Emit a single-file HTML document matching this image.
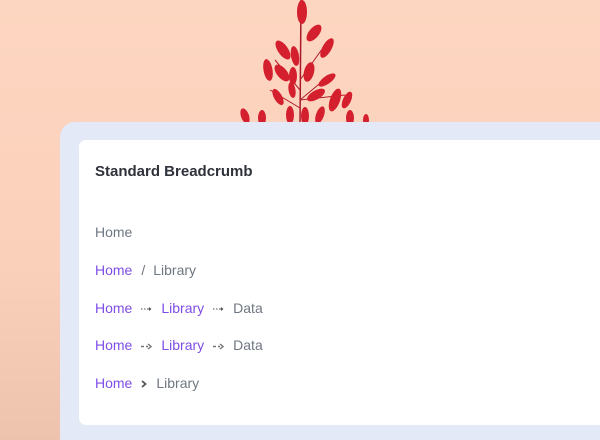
<!DOCTYPE html>
<html><head><style>
html,body{margin:0;padding:0;width:600px;height:440px;overflow:hidden}
body{position:relative;background:linear-gradient(180deg,#fdd6c1 0%,#fbd0ba 60%,#eec3ad 100%);font-family:"Liberation Sans",Roboto,sans-serif}
.outer{position:absolute;left:60px;top:122px;width:560px;height:340px;background:#e3e9f7;border-radius:15px}
.inner{position:absolute;left:79px;top:140px;width:540px;height:285px;background:#fff;border-radius:7px}
.t{position:absolute;left:95px;top:163px;font-size:15px;font-weight:bold;color:#2f323b}
.row{position:absolute;left:95px;font-size:14px;color:#6f7782;white-space:nowrap;height:18px;line-height:18px}
.a{color:#7e4ee6}
.s{display:inline-block;vertical-align:middle;margin:0 9px}
</style></head><body>
<svg style="position:absolute;left:0;top:0" width="600" height="130">
<g fill="#d41f2e" stroke="none">
<path d="M301 0 L300 125" stroke="#a8182a" stroke-width="1.5"/>
<path d="M300 90 L275 60 M300 80 L325 45 M300 100 L330 75 M300 108 L270 90 M300 100 L345 95" stroke="#b21a2a" stroke-width="1"/>
<ellipse cx="302" cy="12" rx="5" ry="12"/>
<ellipse cx="314" cy="33" rx="5" ry="10" transform="rotate(40 314 33)"/>
<ellipse cx="283" cy="50" rx="5" ry="11" transform="rotate(-35 283 50)"/>
<ellipse cx="295" cy="56" rx="4" ry="10" transform="rotate(-10 295 56)"/>
<ellipse cx="327" cy="48" rx="4.5" ry="11" transform="rotate(30 327 48)"/>
<ellipse cx="268" cy="70" rx="4.5" ry="11" transform="rotate(-10 268 70)"/>
<ellipse cx="282" cy="73" rx="5" ry="10" transform="rotate(-40 282 73)"/>
<ellipse cx="293" cy="76" rx="4" ry="9"/>
<ellipse cx="309" cy="72" rx="5" ry="10" transform="rotate(15 309 72)"/>
<ellipse cx="327" cy="80" rx="4" ry="10" transform="rotate(55 327 80)"/>
<ellipse cx="278" cy="97" rx="4" ry="9" transform="rotate(-30 278 97)"/>
<ellipse cx="292" cy="90" rx="3.5" ry="8" transform="rotate(-10 292 90)"/>
<ellipse cx="316" cy="95" rx="4.5" ry="10" transform="rotate(60 316 95)"/>
<ellipse cx="335" cy="100" rx="5" ry="12" transform="rotate(20 335 100)"/>
<ellipse cx="347" cy="100" rx="4" ry="9" transform="rotate(25 347 100)"/>
<ellipse cx="245" cy="116" rx="4" ry="8" transform="rotate(-20 245 116)"/>
<ellipse cx="262" cy="118" rx="4" ry="8"/>
<ellipse cx="290" cy="115" rx="4" ry="9"/>
<ellipse cx="305" cy="116" rx="4" ry="9"/>
<ellipse cx="320" cy="115" rx="4" ry="9" transform="rotate(20 320 115)"/>
<ellipse cx="350" cy="118" rx="4" ry="8"/>
<ellipse cx="366" cy="120" rx="3" ry="6"/>
</g></svg>
<div class="outer"></div>
<div class="inner"></div>
<div class="t">Standard Breadcrumb</div>
<div class="row" style="top:223px">Home</div>
<div class="row" style="top:261px"><span class="a">Home</span><span style="margin:0 8px 0 9px">/</span>Library</div>
<div class="row" style="top:299px"><span class="a">Home</span><svg class="s" width="11" height="6"><path d="M0 3H1.5M3 3H4.5M6 3H8" stroke="#555" stroke-width="1"/><path d="M8 1L10.5 3L8 5Z" fill="#555"/></svg><span class="a">Library</span><svg class="s" width="11" height="6"><path d="M0 3H1.5M3 3H4.5M6 3H8" stroke="#555" stroke-width="1"/><path d="M8 1L10.5 3L8 5Z" fill="#555"/></svg>Data</div>
<div class="row" style="top:336px"><span class="a">Home</span><svg class="s" width="11" height="7"><path d="M0 3.5H3M5 3.5H7" stroke="#777" stroke-width="1.4"/><path d="M7 1L10 3.5L7 6" fill="none" stroke="#777" stroke-width="1.4"/></svg><span class="a">Library</span><svg class="s" width="11" height="7"><path d="M0 3.5H3M5 3.5H7" stroke="#777" stroke-width="1.4"/><path d="M7 1L10 3.5L7 6" fill="none" stroke="#777" stroke-width="1.4"/></svg>Data</div>
<div class="row" style="top:374px"><span class="a">Home</span><svg class="s" width="6" height="8"><path d="M1 1L4.5 4L1 7" fill="none" stroke="#555" stroke-width="1.8"/></svg>Library</div>
</body></html>
